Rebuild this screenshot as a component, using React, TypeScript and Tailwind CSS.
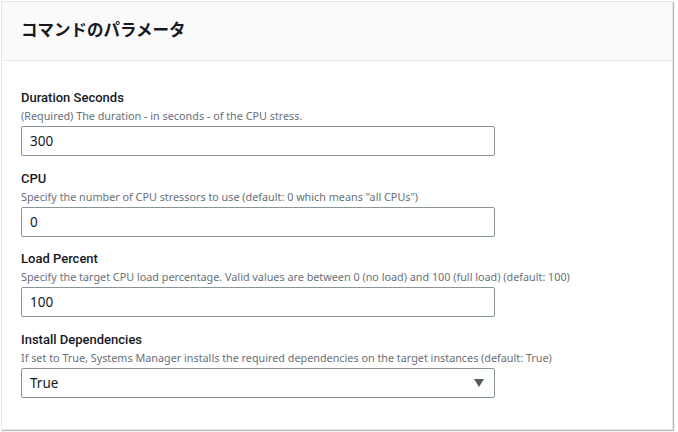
import React from "react";

const fields = [
  { label: "Duration Seconds", desc: "(Required) The duration - in seconds - of the CPU stress.", value: "300" },
  { label: "CPU", desc: 'Specify the number of CPU stressors to use (default: 0 which means "all CPUs")', value: "0" },
  { label: "Load Percent", desc: "Specify the target CPU load percentage. Valid values are between 0 (no load) and 100 (full load) (default: 100)", value: "100" },
];

export default function App() {
  return (
    <div className="w-[678px] h-[432px] bg-white pt-[1px] pl-[1px]" style={{ fontFamily: '"Noto Sans", "Noto Sans CJK JP", sans-serif' }}>
      <div className="w-[672px] h-[429px] bg-white border border-[#e6e6e6] shadow-[1px_1px_1px_0_rgba(0,28,36,0.3)] flex flex-col">
        <div className="h-[59px] bg-[#fafafa] border-b border-[#eaeded] flex items-center pl-[19px] pb-[4px]">
          <h2 className="text-[16.5px] font-bold text-[#16191f] leading-none" style={{ fontFamily: '"Noto Sans CJK JP", sans-serif' }}>コマンドのパラメータ</h2>
        </div>
        <div className="flex flex-col gap-[12.7px] pl-[19px] pt-[27px]">
          {fields.map((f) => (
            <div key={f.label} className="flex flex-col">
              <div className="text-[13px] leading-[20px] text-[#16191f] font-medium" style={{ fontFamily: 'Roboto, sans-serif' }}>{f.label}</div>
              <div className="text-[10.8px] leading-[16px] text-[#687078]">{f.desc}</div>
              <div className="mt-[2px] w-[474px] h-[30px] border border-[#879596] rounded-[2px] flex items-center px-[8px] text-[13.5px] text-[#16191f]">
                {f.value}
              </div>
            </div>
          ))}
          <div className="flex flex-col">
            <div className="text-[13px] leading-[20px] text-[#16191f] font-medium" style={{ fontFamily: 'Roboto, sans-serif' }}>Install Dependencies</div>
            <div className="text-[10.8px] leading-[16px] text-[#687078]">If set to True, Systems Manager installs the required dependencies on the target instances (default: True)</div>
            <div className="mt-[2px] w-[474px] h-[30px] border border-[#879596] rounded-[2px] flex items-center justify-between pl-[8px] pr-[10px] text-[13.5px] text-[#16191f]">
              <span>True</span>
              <svg width="10" height="8" viewBox="0 0 10 8"><path d="M0 0 H10 L5 8 Z" fill="#545b64" /></svg>
            </div>
          </div>
        </div>
      </div>
    </div>
  );
}
